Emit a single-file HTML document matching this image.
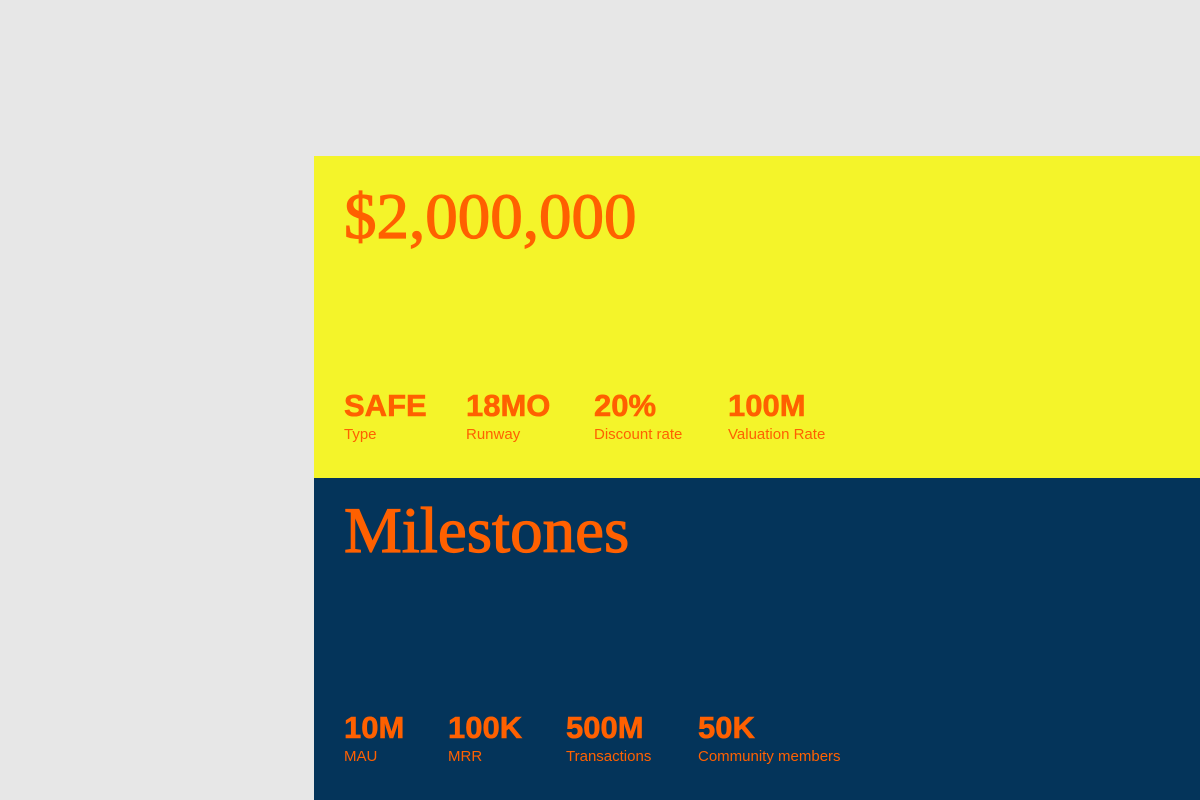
<!DOCTYPE html>
<html><head><style>
html,body{margin:0;padding:0;width:1200px;height:800px;overflow:hidden;background:#e7e7e7;}
.y{position:absolute;left:314px;top:156px;width:886px;height:322px;background:#f4f42a;}
.n{position:absolute;left:314px;top:478px;width:886px;height:322px;background:#04345a;}
.t{position:absolute;color:#ff6000;white-space:nowrap;}
.h{font-family:"Liberation Serif",serif;font-size:65px;line-height:1;-webkit-text-stroke:1.2px #ff6000;}
.v{font-family:"Liberation Sans",sans-serif;font-weight:bold;font-size:31px;line-height:1;-webkit-text-stroke:0.6px #ff6000;}
.l{font-family:"Liberation Sans",sans-serif;font-size:15px;line-height:1;}
</style></head><body>
<div class="y"></div><div class="n"></div>
<div class="t h" style="left:344px;top:185px">$2,000,000</div>
<div class="t v" style="left:344px;top:390px">SAFE</div>
<div class="t v" style="left:466px;top:390px">18MO</div>
<div class="t v" style="left:594px;top:390px">20%</div>
<div class="t v" style="left:728px;top:390px">100M</div>
<div class="t l" style="left:344px;top:427px">Type</div>
<div class="t l" style="left:466px;top:427px">Runway</div>
<div class="t l" style="left:594px;top:427px">Discount rate</div>
<div class="t l" style="left:728px;top:427px">Valuation Rate</div>
<div class="t h" style="left:344px;top:499px">Milestones</div>
<div class="t v" style="left:344px;top:712px">10M</div>
<div class="t v" style="left:448px;top:712px">100K</div>
<div class="t v" style="left:566px;top:712px">500M</div>
<div class="t v" style="left:698px;top:712px">50K</div>
<div class="t l" style="left:344px;top:749px">MAU</div>
<div class="t l" style="left:448px;top:749px">MRR</div>
<div class="t l" style="left:566px;top:749px">Transactions</div>
<div class="t l" style="left:698px;top:749px">Community members</div>
</body></html>
